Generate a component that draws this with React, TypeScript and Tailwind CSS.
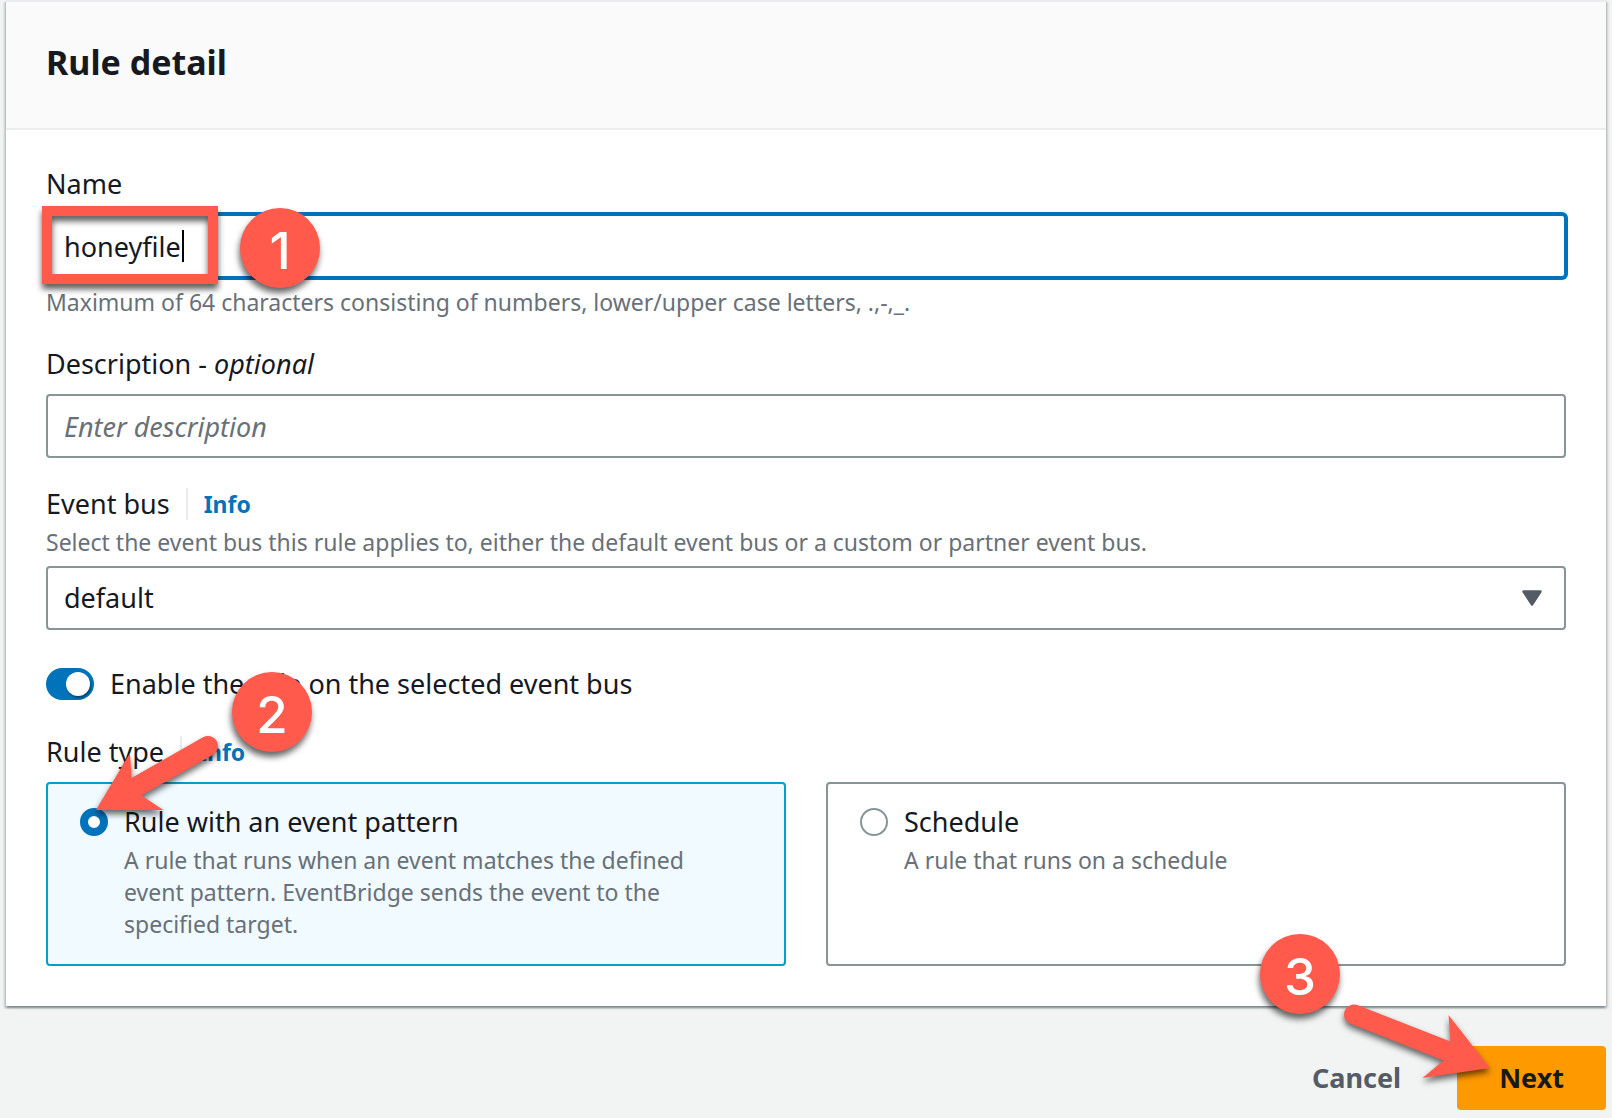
import type { ReactNode } from 'react';

const label = 'text-[27px] leading-[44px] font-[450] text-[#16191f]';
const hint = 'text-[23px] leading-[32px] font-[450] text-[#687078]';
const field =
  'block h-16 w-full rounded-sm border-2 border-[#879596] bg-white px-4 text-[27px] font-[450] text-[#16191f] outline-none';

function Step({ children, className }: { children: ReactNode; className: string }) {
  return (
    <span
      className={`pointer-events-none absolute z-20 flex size-20 items-center justify-center rounded-full bg-[#ff5a4c] pt-1 font-['Inter',sans-serif] text-[51px] leading-none font-medium text-white drop-shadow-[-1px_5px_3px_rgba(0,0,0,0.6)] ${className}`}
    >
      {children}
    </span>
  );
}

function InfoLink() {
  return (
    <a href="#info" className="ml-4 border-l-2 border-[#eaeded] pl-4 text-[23px] leading-[32px] font-bold text-[#0073bb]">
      Info
    </a>
  );
}

function RuleOption({
  id,
  title,
  text,
  checked,
}: {
  id: string;
  title: string;
  text: string;
  checked?: boolean;
}) {
  return (
    <label
      htmlFor={id}
      className="flex flex-1 gap-4 rounded-sm border-2 border-[#879596] bg-white pt-4 pr-16 pb-6 pl-8 has-checked:border-[#00a1c9] has-checked:bg-[#f1faff]"
    >
      <input
        id={id}
        type="radio"
        name="rule-type"
        defaultChecked={checked}
        className="mt-2 size-7 shrink-0 appearance-none rounded-full border-2 border-[#879596] bg-white checked:border-8 checked:border-[#0073bb]"
      />
      <span className="block">
        <span className={`block ${label}`}>{title}</span>
        <span className={`block ${hint}`}>{text}</span>
      </span>
    </label>
  );
}

export default function App() {
  return (
    <main className="min-h-screen overflow-x-hidden bg-[#f2f3f3] px-1.5 pb-2 font-['Noto_Sans',sans-serif]">
      <section className="border-t-2 border-[#eaeded] bg-white shadow-[0_2px_2px_0_rgba(0,28,36,0.3),2px_2px_2px_0_rgba(0,28,36,0.15),-2px_2px_2px_0_rgba(0,28,36,0.15)]">
        <header className="border-b-2 border-[#eaeded] bg-[#fafafa] px-10 pt-9 pb-[42px]">
          <h2 className="text-[34px] leading-[48px] font-bold text-[#16191f]">Rule detail</h2>
        </header>

        <form className="flex flex-col gap-6 px-10 pt-8 pb-10">
          <div>
            <label htmlFor="name" className={`block ${label}`}>
              Name
            </label>
            <div className="relative mt-2">
              <input
                id="name"
                defaultValue="honeyfile"
                className="block h-16 w-full rounded-sm border-2 border-[#0073bb] bg-white px-4 text-[27px] font-[450] text-[#16191f] caret-transparent shadow-[0_0_0_2px_#0073bb] outline-none"
              />
              <span className="absolute top-4 left-[136px] h-8 w-0.5 bg-black" />
              <span className="pointer-events-none absolute -top-2 -left-1 h-[78px] w-44 border-10 border-[#ff5a4c] drop-shadow-[0_5px_3px_rgba(0,0,0,0.65)]" />
              <Step className="-top-1.5 left-[194px]">1</Step>
            </div>
            <p className={`mt-2 ${hint}`}>
              Maximum of 64 characters consisting of numbers, lower/upper case letters, .,-,_.
            </p>
          </div>

          <div>
            <label htmlFor="description" className={`block ${label}`}>
              Description - <em>optional</em>
            </label>
            <input
              id="description"
              placeholder="Enter description"
              className={`mt-2 placeholder:text-[#687078] placeholder:italic ${field}`}
            />
          </div>

          <div>
            <div className="flex items-center">
              <label htmlFor="bus" className={label}>
                Event bus
              </label>
              <InfoLink />
            </div>
            <p className={hint}>
              Select the event bus this rule applies to, either the default event bus or a custom or partner event bus.
            </p>
            <div className="relative mt-2">
              <select id="bus" className={`appearance-none ${field}`}>
                <option>default</option>
              </select>
              <svg
                viewBox="0 0 20 16"
                className="pointer-events-none absolute top-6 right-6 h-4 w-5 fill-[#545b64] stroke-[#545b64]"
              >
                <path d="M1.5 1.5h17L10 14.5z" strokeWidth="2.5" strokeLinejoin="round" />
              </svg>
            </div>
          </div>

          <label htmlFor="enable" className="mt-2 flex items-center gap-4">
            <input
              id="enable"
              type="checkbox"
              role="switch"
              defaultChecked
              className="flex h-8 w-12 shrink-0 appearance-none items-center rounded-full bg-[#879596] px-1 before:size-6 before:rounded-full before:bg-white before:shadow-[1px_2px_2px_rgba(0,0,0,0.4)] checked:justify-end checked:bg-[#0073bb]"
            />
            <span className={label}>Enable the rule on the selected event bus</span>
          </label>

          <div className="relative" role="radiogroup" aria-labelledby="rule-type">
            <div className="flex items-center">
              <span id="rule-type" className={label}>
                Rule type
              </span>
              <InfoLink />
            </div>
            <div className="mt-2 flex gap-10">
              <RuleOption
                id="pattern"
                title="Rule with an event pattern"
                text="A rule that runs when an event matches the defined event pattern. EventBridge sends the event to the specified target."
                checked
              />
              <RuleOption id="schedule" title="Schedule" text="A rule that runs on a schedule" />
            </div>
            <svg
              viewBox="90 730 140 90"
              className="pointer-events-none absolute top-0 left-11 z-10 h-[90px] w-[140px] overflow-visible fill-[#ff5a4c] drop-shadow-[0_4px_3px_rgba(0,0,0,0.6)]"
            >
              <path d="M96 810L130 753L131.500 778L203 737.300A10 10 0 0 1 213 754.700L141.500 795.500L163.500 810Z" />
            </svg>
            <Step className="-top-[58px] left-[186px]">2</Step>
          </div>
        </form>
      </section>

      <footer className="relative mt-10 flex justify-end gap-4">
        <button className="h-16 px-10 text-[27px] font-bold text-[#545b64]">Cancel</button>
        <button className="h-16 rounded-sm border-2 border-[#ff9900] bg-[#ff9900] px-10 text-[27px] font-bold text-[#16191f]">Next</button>
        <svg
          viewBox="1340 1000 156 84"
          className="pointer-events-none absolute -top-[46px] right-[110px] z-10 h-[84px] w-[156px] overflow-visible fill-[#ff5a4c] drop-shadow-[0_4px_3px_rgba(0,0,0,0.6)]"
        >
          <path d="M1490 1068L1448.500 1015L1450.500 1041.500L1357.300 1005A10 10 0 0 0 1350 1023.600L1443.500 1060.500L1422.500 1078Z" />
        </svg>
        <Step className="-top-28 right-[266px]">3</Step>
      </footer>
    </main>
  );
}
